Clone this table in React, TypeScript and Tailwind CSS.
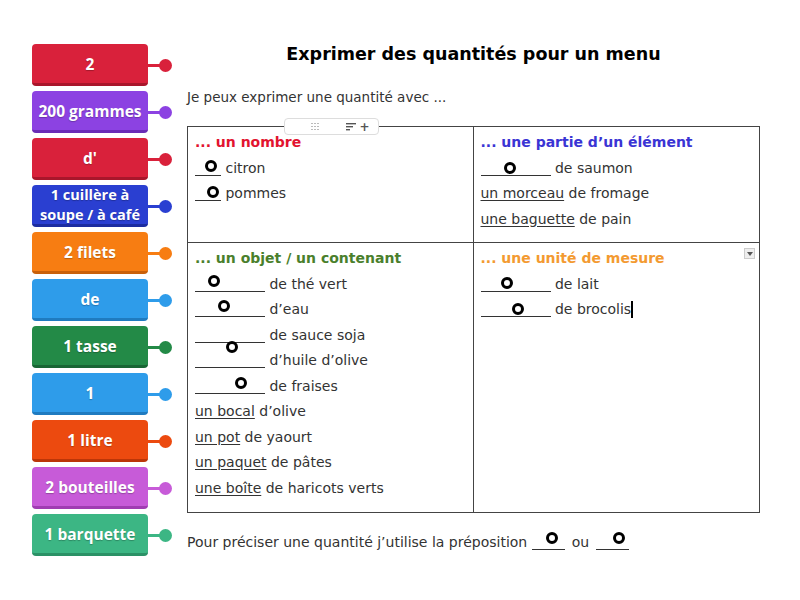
import type { ReactNode } from "react";

type Tile = { label: ReactNode; bg: string; edge: string; dot: string };

const tiles: Tile[] = [
  { label: "2", bg: "bg-[#d9213b]", edge: "border-[#a9162b]", dot: "bg-[#d9213b]" },
  { label: "200 grammes", bg: "bg-[#8c42e2]", edge: "border-[#6a2cb5]", dot: "bg-[#8c42e2]" },
  { label: "d'", bg: "bg-[#d9213b]", edge: "border-[#a9162b]", dot: "bg-[#d9213b]" },
  {
    label: (
      <>
        1 cuillère à<br />soupe / à café
      </>
    ),
    bg: "bg-[#2a3fd1]",
    edge: "border-[#1c2ca0]",
    dot: "bg-[#2a3fd1]",
  },
  { label: "2 filets", bg: "bg-[#f77d12]", edge: "border-[#c9600a]", dot: "bg-[#f77d12]" },
  { label: "de", bg: "bg-[#2e9cea]", edge: "border-[#1f7bc0]", dot: "bg-[#2e9cea]" },
  { label: "1 tasse", bg: "bg-[#238a47]", edge: "border-[#186634]", dot: "bg-[#238a47]" },
  { label: "1", bg: "bg-[#2e9cea]", edge: "border-[#1f7bc0]", dot: "bg-[#2e9cea]" },
  { label: "1 litre", bg: "bg-[#ec4a0f]", edge: "border-[#bb3608]", dot: "bg-[#ec4a0f]" },
  { label: "2 bouteilles", bg: "bg-[#c75bd8]", edge: "border-[#a03db2]", dot: "bg-[#c75bd8]" },
  { label: "1 barquette", bg: "bg-[#3cb684]", edge: "border-[#2b9166]", dot: "bg-[#3cb684]" },
];

function Blank({ w, cx, d }: { w: string; cx: number; d: number }) {
  return (
    <span className={`relative inline-block h-[14px] ${w} border-b border-[#333] align-[-3px]`}>
      <span
        className="absolute w-[12px] h-[12px] rounded-full border-[3px] border-black bg-transparent"
        style={{ left: cx - 6, bottom: d - 6 }}
      />
    </span>
  );
}

function U({ children }: { children: ReactNode }) {
  return <span className="underline underline-offset-2 decoration-[#333]">{children}</span>;
}

export default function App() {
  return (
    <div
      className="w-[800px] h-[600px] bg-white flex pt-[44px] text-[#333]"
      style={{ fontFamily: '"DejaVu Sans", Verdana, sans-serif' }}
    >
      <div className="w-[187px] pl-[32px] flex flex-col gap-[5px]">
        {tiles.map((t, i) => (
          <div key={i} className="flex items-center">
            <div
              className={`w-[116px] h-[42px] rounded-[4px] border-b-[3px] ${t.bg} ${t.edge} flex items-center justify-center text-center text-white font-bold ${
                i === 3 ? "text-[14.5px] leading-[20px]" : "text-[15.5px] leading-[20px]"
              }`}
              style={{ fontFamily: '"Open Sans", sans-serif' }}
            >
              <span className="[text-shadow:0_1px_1px_rgba(0,0,0,0.25)]">{t.label}</span>
            </div>
            <div className={`w-[12px] h-[3px] ${t.dot}`} />
            <div className={`w-[13px] h-[13px] rounded-full -ml-[1px] ${t.dot}`} />
          </div>
        ))}
      </div>

      <div className="w-[573px] flex flex-col">
        <h1 className="text-center font-bold text-[17.5px] leading-[20px] text-black">
          Exprimer des quantités pour un menu
        </h1>
        <p className="mt-[23px] text-[13.5px] leading-[20px]">Je peux exprimer une quantité avec ...</p>

        <div className="relative mt-[19px] grid grid-cols-2 grid-rows-[116px_269px] border border-[#444] text-[14px] leading-[25.5px]">
          <div className="absolute left-[96px] top-[-9px] w-[95px] h-[17px] bg-white border border-[#ddd] rounded-[4px] flex items-center">
            <div className="ml-[26px] grid grid-cols-3 gap-[1.5px]">
              {Array.from({ length: 9 }).map((_, i) => (
                <span key={i} className="w-[1.5px] h-[1.5px] bg-[#bbb]" />
              ))}
            </div>
            <svg className="ml-[27px]" width="10" height="8" viewBox="0 0 10 8">
              <rect x="0" y="0" width="10" height="1.4" fill="#555" />
              <rect x="0" y="3" width="7" height="1.4" fill="#555" />
              <rect x="0" y="6" width="4" height="1.4" fill="#555" />
            </svg>
            <span className="ml-[4px] text-[12px] leading-none font-bold text-[#555]">+</span>
          </div>

          <div className="border-r border-b border-[#444] pl-[7px] pt-[3px]">
            <div className="font-bold text-[#e2132f]">... un nombre</div>
            <div>
              <Blank w="w-[26px]" cx={16} d={9} /> citron
            </div>
            <div>
              <Blank w="w-[26px]" cx={18} d={8} /> pommes
            </div>
          </div>

          <div className="border-b border-[#444] pl-[7px] pt-[3px]">
            <div className="font-bold text-[#3a34d4]">... une partie d’un élément</div>
            <div>
              <Blank w="w-[70px]" cx={29} d={7} /> de saumon
            </div>
            <div>
              <U>un morceau</U> de fromage
            </div>
            <div>
              <U>une baguette</U> de pain
            </div>
          </div>

          <div className="border-r border-[#444] pl-[7px] pt-[3px]">
            <div className="font-bold text-[#4a7f2c]">... un objet / un contenant</div>
            <div>
              <Blank w="w-[70px]" cx={19} d={10} /> de thé vert
            </div>
            <div>
              <Blank w="w-[70px]" cx={29} d={10} /> d’eau
            </div>
            <div>
              <Blank w="w-[70px]" cx={37} d={-5} /> de sauce soja
            </div>
            <div>
              <span className="inline-block h-[14px] w-[70px] border-b border-[#333] align-[-3px]" /> d’huile d’olive
            </div>
            <div>
              <Blank w="w-[70px]" cx={46} d={10} /> de fraises
            </div>
            <div>
              <U>un bocal</U> d’olive
            </div>
            <div>
              <U>un pot</U> de yaourt
            </div>
            <div>
              <U>un paquet</U> de pâtes
            </div>
            <div>
              <U>une boîte</U> de haricots verts
            </div>
          </div>

          <div className="relative pl-[7px] pt-[3px]">
            <div className="absolute right-[4px] top-[5px] w-[11px] h-[11px] bg-[#eee] border border-[#ccc] flex items-center justify-center">
              <svg width="6" height="4" viewBox="0 0 6 4">
                <path d="M0 0 L6 0 L3 4 Z" fill="#555" />
              </svg>
            </div>
            <div className="font-bold text-[#f39a31]">... une unité de mesure</div>
            <div>
              <Blank w="w-[70px]" cx={26} d={8} /> de lait
            </div>
            <div>
              <Blank w="w-[70px]" cx={37} d={7} /> de brocolis
              <span className="inline-block w-[1.5px] h-[17px] bg-black align-[-4px]" />
            </div>
          </div>
        </div>

        <p className="mt-[19px] text-[14px] leading-[20px]">
          Pour préciser une quantité j’utilise la préposition <Blank w="w-[33px]" cx={20} d={11} />
          <span className="mx-[7px]">ou</span>
          <Blank w="w-[33px]" cx={23} d={11} />
        </p>
      </div>
    </div>
  );
}
